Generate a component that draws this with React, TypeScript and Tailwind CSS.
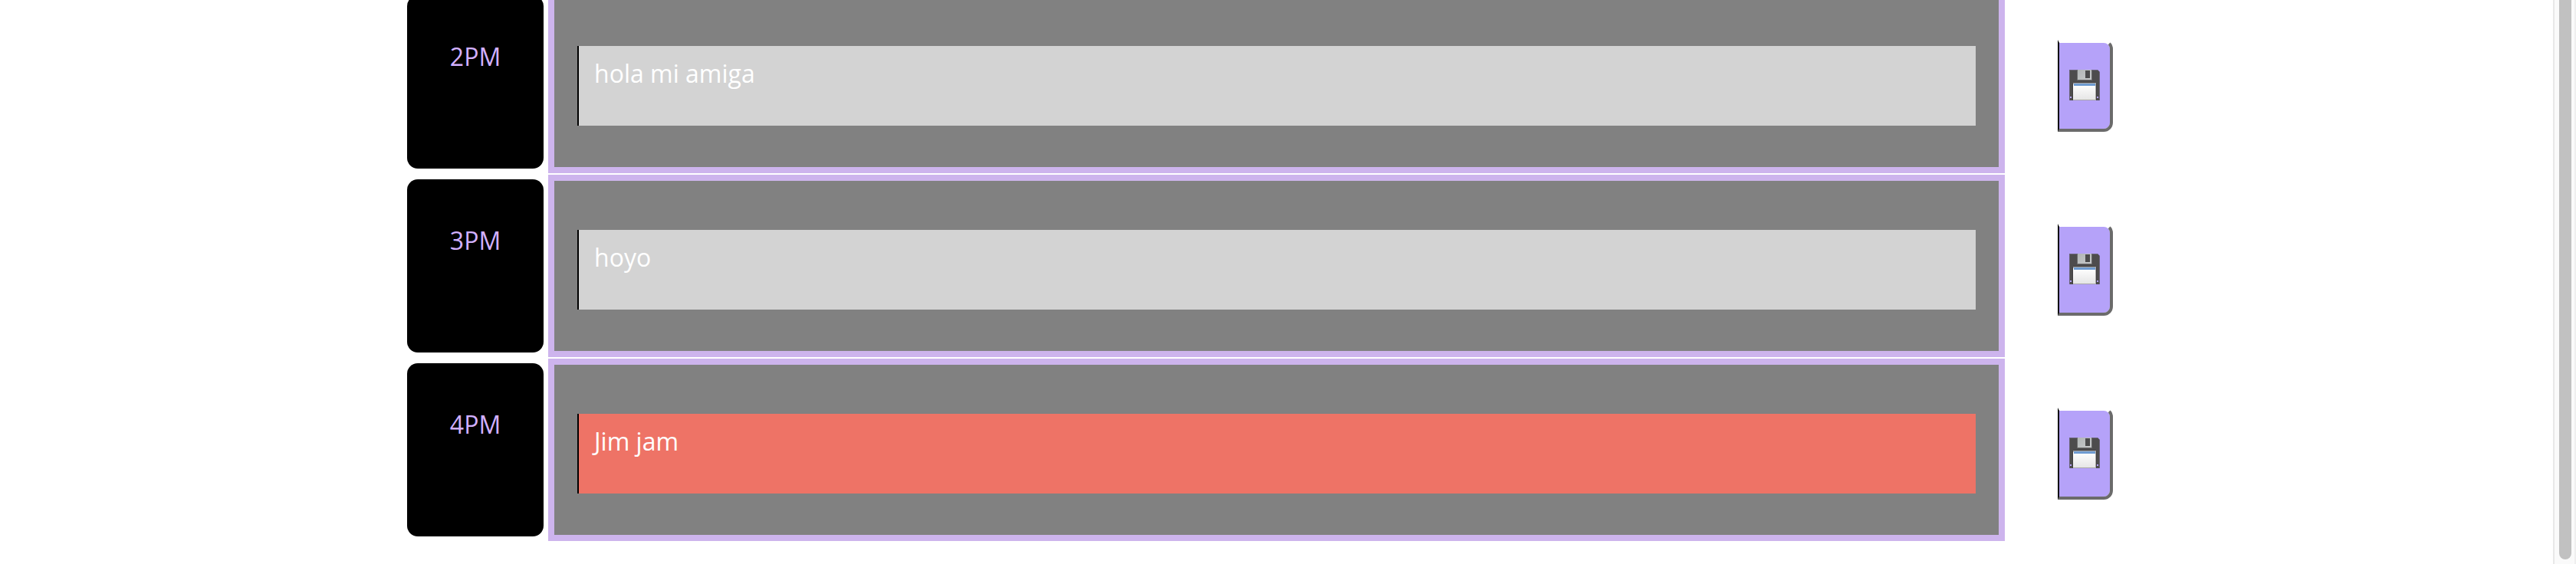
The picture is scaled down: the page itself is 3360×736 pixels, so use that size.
import { useId } from "react";

type Status = "past" | "present";

interface Slot {
  hour: string;
  note: string;
  status: Status;
}

const slots: Slot[] = [
  { hour: "2PM", note: "hola mi amiga", status: "past" },
  { hour: "3PM", note: "hoyo", status: "past" },
  { hour: "4PM", note: "Jim jam", status: "present" },
];

const noteColors: Record<Status, string> = {
  past: "bg-[#d3d3d3]",
  present: "bg-[#ee7366]",
};

function FloppyIcon() {
  const id = useId();
  const labelFill = `${id}-label`;
  const shutterFill = `${id}-shutter`;
  return (
    <svg viewBox="0 0 40 40" className="size-10" aria-hidden="true">
      <defs>
        <linearGradient id={labelFill} x1="0" y1="0" x2="0" y2="1">
          <stop offset="0" stopColor="#ffffff" />
          <stop offset="1" stopColor="#e6e6e6" />
        </linearGradient>
        <linearGradient id={shutterFill} x1="0" y1="0" x2="1" y2="1">
          <stop offset="0" stopColor="#b2b6b7" />
          <stop offset="1" stopColor="#c6c8c9" />
        </linearGradient>
      </defs>
      <path
        fillRule="evenodd"
        d="M0 0H37L40 3V40H0ZM1 35V37H3V35ZM36 35V37H38V35Z"
        fill="#4d4c4d"
      />
      <path d="M.5 0V40M39.5 3V40" stroke="#6a6478" />
      <path d="M0 .5H37" stroke="#6a6478" />
      <rect x="10" y="0" width="20" height="14" fill="#69696a" />
      <rect x="11" y="0" width="18" height="13" fill={`url(#${shutterFill})`} />
      <rect x="21" y="1" width="6" height="10" fill="#4b4b4c" />
      <path d="M4 40V18L6 16H34L36 18V40Z" fill="#403f40" />
      <rect x="5" y="17" width="30" height="23" fill="#aaa9a8" />
      <rect x="5" y="19" width="29" height="20" fill={`url(#${labelFill})`} />
      <rect x="6" y="18" width="28" height="3" fill="#6e9bd1" />
    </svg>
  );
}

function TimeBlock({ hour, note, status }: Slot) {
  const id = `note-${hour}`;
  return (
    <form className="grid grid-cols-12" onSubmit={(e) => e.preventDefault()}>
      <label
        htmlFor={id}
        className="m-1.5 rounded-[14px] bg-black pt-14 text-center text-[#d2b0ff]"
      >
        {hour}
      </label>
      <div className="col-span-10 border-8 border-[#cdb4ed] bg-[#818181] px-[30px] pt-16 pb-[54px]">
        <textarea
          id={id}
          defaultValue={note}
          className={`block h-[104px] w-full resize-none overflow-hidden border-l-2 border-black px-5 py-3 text-white outline-none ${noteColors[status]}`}
        />
      </div>
      <div className="pt-16 pl-[69px]">
        <button
          type="submit"
          aria-label={`Save ${hour}`}
          className="flex h-[120px] w-[72px] items-center justify-center rounded-r-xl border-4 border-l-2 border-t-transparent border-r-[#6b6b6b] border-b-[#6b6b6b] border-l-black bg-[#b5a2f9] bg-clip-padding pb-0.5"
        >
          <FloppyIcon />
        </button>
      </div>
    </form>
  );
}

function ScrollRail() {
  return (
    <div className="flex w-[30px] shrink-0 border-x-2 border-l-[#e8e8e8] border-r-[#efefef] bg-[#fafafa] pb-1.5 pl-1.5">
      <div className="w-4 rounded-b-full bg-[#c1c1c1]" />
    </div>
  );
}

export default function App() {
  return (
    <div className="flex h-screen overflow-hidden bg-white font-['Open_Sans',sans-serif] text-[32px] leading-[48px]">
      <main className="flex flex-1 flex-col justify-end pb-[30px]">
        <div className="mx-auto flex w-full max-w-[2280px] flex-col gap-0.5">
          {slots.map((slot) => (
            <TimeBlock key={slot.hour} {...slot} />
          ))}
        </div>
      </main>
      <ScrollRail />
    </div>
  );
}
